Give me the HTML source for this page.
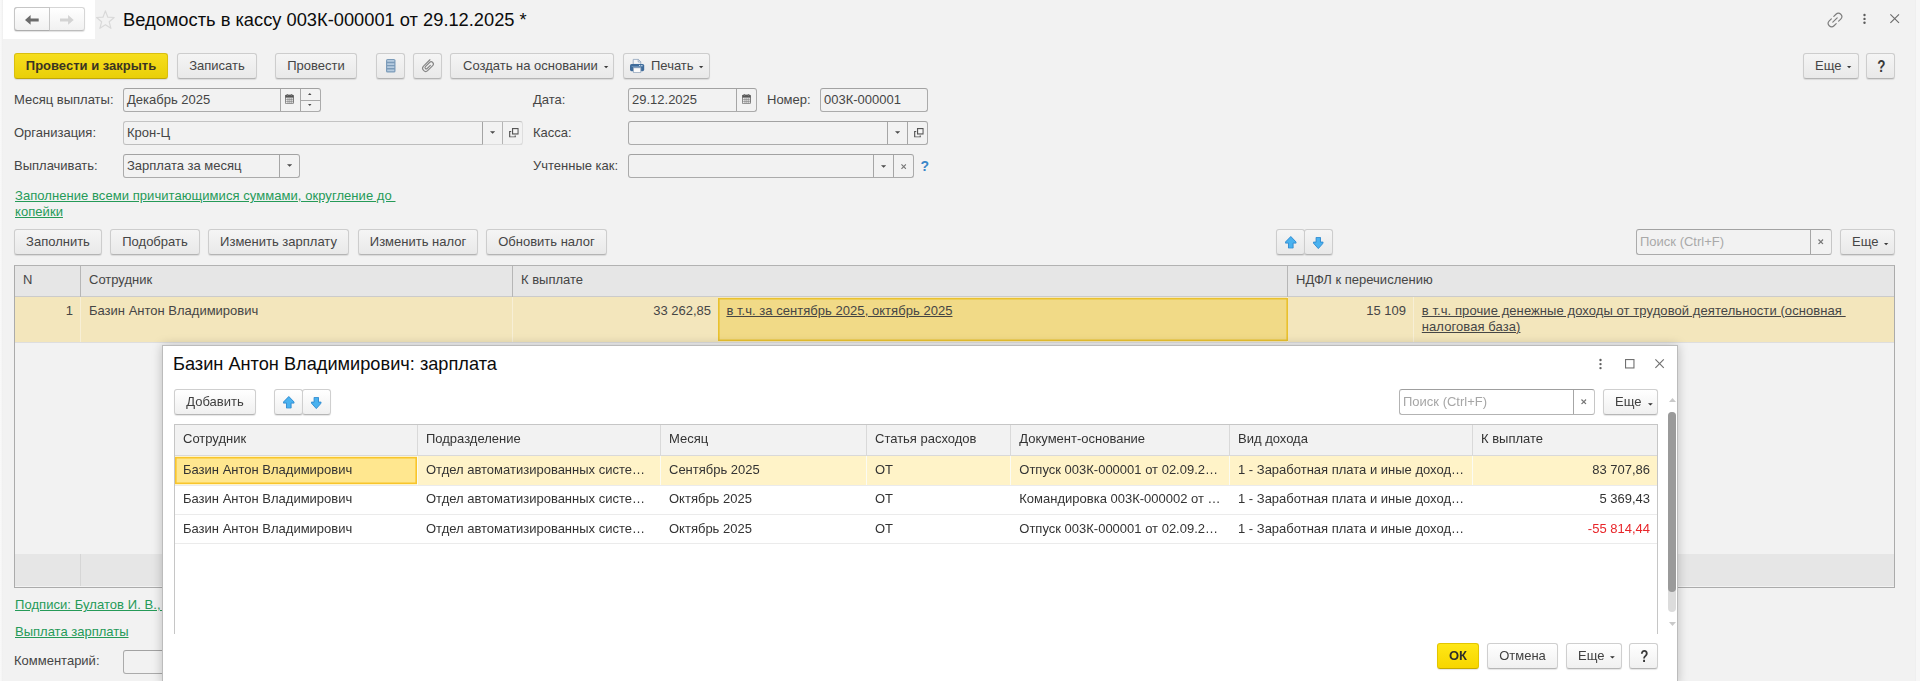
<!DOCTYPE html>
<html lang="ru">
<head>
<meta charset="utf-8">
<title>Ведомость в кассу</title>
<style>
*{box-sizing:border-box;margin:0;padding:0}
html,body{width:1920px;height:681px;overflow:hidden}
body{background:#f2f2f2;font-family:"Liberation Sans",sans-serif;font-size:13px;color:#454545;position:relative}
.a{position:absolute}
.t{position:absolute;white-space:nowrap;line-height:16px;height:16px}
.btn{position:absolute;height:26px;border:1px solid #cdcdcd;border-bottom-color:#b4b4b4;border-radius:3px;background:linear-gradient(#f5f5f5,#e9e9e9);box-shadow:0 1px 1px rgba(0,0,0,.10);text-align:center;line-height:24px;white-space:nowrap;color:#454545}
.btn.y{background:linear-gradient(#f6de1e,#e9cf08);border-color:#d9bf10;border-bottom-color:#bfa70a;color:#3a3422;font-weight:bold}
.inp{position:absolute;height:24px;border:1px solid #ababab;border-top-color:#a2a2a2;border-radius:3px;background:#f2f2f2;line-height:22px;padding-left:3px;white-space:nowrap;color:#454545}
.inp i{position:absolute;top:0;bottom:0;width:1px;background:#a6a6a6}
.btn.w{background:linear-gradient(#fff,#f0f0f0);border-color:#cfcfcf;border-bottom-color:#b6b6b6;color:#404040}
.inp.w{background:#fff;border-color:#b3b3b3;border-top-color:#9f9f9f}
.q{display:block;font-size:15.6px;font-weight:bold;transform:translate(.9px,1.3px) scaleX(.86);color:#3a3a3a}
.lnk{color:#259a58;text-decoration:underline;letter-spacing:.06px}
.u{text-decoration:underline;letter-spacing:.08px}
.car{position:absolute;width:0;height:0;border-left:2.1px solid transparent;border-right:2.1px solid transparent;border-top:2.3px solid #3e3e3e}
#mw .car{border-left-width:2.4px;border-right-width:2.4px;border-top:2.7px solid #333;margin-left:-.3px}
svg{position:absolute;overflow:visible}
</style>
</head>
<body>
<svg width="0" height="0" style="position:absolute"><defs>
<symbol id="cal" viewBox="0 0 9 10"><rect x=".4" y="1" width="8.2" height="8.8" rx="1" fill="#e9e9e9" stroke="#5a5a5a" stroke-width=".8"/><rect x=".4" y="1" width="8.2" height="2.6" fill="#555"/><rect x="1.9" y="0" width="1.2" height="2" fill="#777"/><rect x="5.9" y="0" width="1.2" height="2" fill="#777"/><path d="M1.2 5.5H7.8M1.2 7.5H7.8M3 4V9.3M4.9 4V9.3M6.8 4V9.3" stroke="#8a8a8a" stroke-width=".7"/></symbol>
<symbol id="dd" viewBox="0 0 6 3"><path d="M0 0H6L3 3Z" fill="#4a4a4a"/></symbol>
<symbol id="du" viewBox="0 0 6 3"><path d="M0 3H6L3 0Z" fill="#4a4a4a"/></symbol>
<symbol id="opn" viewBox="0 0 10 10"><path d="M2.2 3.6H.6V9.4H6.4V7.8" fill="none" stroke="#555" stroke-width="1.2"/><rect x="3.6" y=".6" width="5.8" height="5.6" fill="#f6f6f6" stroke="#555" stroke-width="1.2"/></symbol>
<symbol id="x" viewBox="0 0 6 6"><path d="M.5 .5L5.5 5.5M5.5 .5L.5 5.5" stroke="#777" stroke-width="1.3" fill="none"/></symbol>
<symbol id="up" viewBox="0 0 11.6 12.6"><path d="M5.8 .5L11.2 6.1V7.1H8.1V12.2H3.5V7.1H.4V6.1Z" fill="#4ab2ef" stroke="#2b88cf" stroke-width=".9" stroke-linejoin="round"/></symbol>
<symbol id="dn" viewBox="0 0 10.6 12"><path d="M5.3 11.6L10.2 6.1V5.1H7.5V.4H3.1V5.1H.4V6.1Z" fill="#4ab2ef" stroke="#2b88cf" stroke-width=".9" stroke-linejoin="round"/></symbol>
</defs></svg>
<!-- edges -->
<div class="a" style="left:0;top:0;width:3px;height:681px;background:linear-gradient(90deg,#fafafa,#f6f6f6 50%,#eeeeee)"></div>
<div class="a" style="left:1915px;top:0;width:5px;height:681px;background:#f7f7f7;border-left:1px solid #efefef"></div>
<div class="a" style="left:3px;top:0;width:92.4px;height:38.5px;background:#fff"></div>

<!-- nav buttons -->
<div class="a" style="left:14.3px;top:7.4px;width:70.4px;height:23.8px;border:1px solid #d6d6d6;border-bottom-color:#bdbdbd;border-radius:3px;background:linear-gradient(#fff,#f1f1f1);box-shadow:0 1px 1px rgba(0,0,0,.12)"></div>
<div class="a" style="left:14.3px;top:7.4px;width:36.2px;height:23.8px;border:1px solid #c6c6c6;border-bottom-color:#adadad;border-radius:3px 0 0 3px"></div>
<svg style="left:25.3px;top:14.6px" width="14" height="10" viewBox="0 0 14 10"><path d="M0 4.9 L5.6 0 V3.4 H13.7 V6.4 H5.6 V9.8 Z" fill="#6b6b6b"/></svg>
<svg style="left:59.6px;top:14.6px" width="14" height="10" viewBox="0 0 14 10"><path d="M13.7 4.9 L8.1 0 V3.4 H0 V6.4 H8.1 V9.8 Z" fill="#d3d3d3"/></svg>
<!-- star -->
<svg style="left:96px;top:10px" width="19" height="19" viewBox="0 0 19 19"><path d="M9.4 0.9 L11.8 7.2 L18.2 7.5 L13.2 11.8 L14.9 18.3 L9.4 14.7 L3.9 18.3 L5.6 11.8 L0.6 7.5 L7 7.2 Z" fill="none" stroke="#d9d9d9" stroke-width="1.2" stroke-linejoin="round"/></svg>
<!-- title -->
<div class="t" style="left:123px;top:8.6px;font-size:18.3px;line-height:22px;height:22px;color:#0c0c0c">Ведомость в кассу 003К-000001 от 29.12.2025 *</div>

<!-- top right icons -->
<svg style="left:1826.05px;top:10.85px" width="18" height="18" viewBox="-9 -9 18 18"><g transform="rotate(-45)" fill="none" stroke="#7c7c7c" stroke-width="1.15" stroke-linecap="round"><path d="M1.7 -3.4H4.75A3.4 3.4 0 0 1 4.75 3.4H1.7"/><path d="M-1.7 3.4H-4.75A3.4 3.4 0 0 1 -4.75 -3.4H-1.7"/><path d="M-3.1 0H3.1"/></g></svg>
<svg style="left:1862px;top:12.4px" width="5" height="14" viewBox="0 0 5 14"><circle cx="2.5" cy="3" r="1.2" fill="#5c5c5c"/><circle cx="2.5" cy="6.9" r="1.2" fill="#5c5c5c"/><circle cx="2.5" cy="10.8" r="1.2" fill="#5c5c5c"/></svg>
<svg style="left:1889.9px;top:14.1px" width="9.4" height="9.2" viewBox="0 0 9.4 9.2"><path d="M.4 .4L9 8.8M9 .4L.4 8.8" stroke="#6c6c6c" stroke-width="1.15" fill="none"/></svg>
<!-- toolbar 1 -->
<div class="btn y" style="left:14px;top:53px;width:154px">Провести и закрыть</div>
<div class="btn" style="left:177px;top:53px;width:80px">Записать</div>
<div class="btn" style="left:275px;top:53px;width:82px">Провести</div>
<div class="btn" style="left:376px;top:53px;width:29px"></div>
<svg style="left:385.8px;top:59px" width="9.5" height="13.6" viewBox="0 0 9.5 13.6"><rect width="9.5" height="13.6" rx="1.6" fill="#7b9bb9"/><path d="M1.2 1.9H8.3M1.2 5.1H8.3M1.2 8.2H8.3M1.2 11.3H8.3" stroke="#b6cbdf" stroke-width="1.7"/></svg>
<div class="btn" style="left:413px;top:53px;width:29px"></div>
<svg style="left:419.95px;top:57.7px" width="16" height="16" viewBox="-8 -8 16 16"><g transform="rotate(-45) scale(.9)"><path d="M6.4 -3.4H-3.6A3.4 3.4 0 0 0 -3.6 3.4H4A2.45 2.45 0 0 0 4 -1.5H-2.6A1.4 1.4 0 0 0 -2.6 1.3H2.4" fill="none" stroke="#868686" stroke-width="1.25" stroke-linecap="round"/></g></svg>
<div class="btn" style="left:450px;top:53px;width:164px;text-align:left;padding-left:12px">Создать на основании</div>
<svg style="left:603.7px;top:65.8px" width="4.3" height="2.4" viewBox="0 0 6 3"><path d="M0 0H6L3 3Z" fill="#3a3a3a"/></svg>
<div class="btn" style="left:623px;top:53px;width:87px;text-align:left;padding-left:27px">Печать</div>
<svg style="left:698.9px;top:65.8px" width="4.3" height="2.4" viewBox="0 0 6 3"><path d="M0 0H6L3 3Z" fill="#3a3a3a"/></svg>
<svg style="left:630px;top:58.8px" width="14.2" height="14" viewBox="0 0 14.2 14"><path d="M3.2 5.4V.4H8.4L10.8 2.8V5.4Z" fill="#f4f6f8" stroke="#8ea3bd" stroke-width=".8"/><path d="M8.2 .4V3H10.8" fill="none" stroke="#8ea3bd" stroke-width=".8"/><rect x="0" y="5" width="14.2" height="7.2" rx="1.6" fill="#3f6c9b"/><rect x="1.6" y="7.2" width="11" height=".8" fill="#8fb0d2" opacity=".6"/><rect x="9" y="6" width="1.3" height="1" fill="#c6d8ea"/><rect x="11.2" y="6" width="1.3" height="1" fill="#c6d8ea"/><rect x="3.4" y="8.8" width="7.4" height="4.8" fill="#fbfbfb" stroke="#9aabc0" stroke-width=".8"/></svg>
<div class="btn" style="left:1803px;top:53px;width:56px;text-align:left;padding-left:11px">Еще</div>
<svg style="left:1846.9px;top:65.7px" width="4.3" height="2.4" viewBox="0 0 6 3"><path d="M0 0H6L3 3Z" fill="#3a3a3a"/></svg>
<div class="btn" style="left:1866px;top:53px;width:29px"><b class="q">?</b></div>

<!-- fields -->
<div class="t" style="left:14px;top:92px">Месяц выплаты:</div>
<div class="inp" style="left:123px;top:88px;width:198px">Декабрь 2025<i style="left:156px"></i><i style="left:176px"></i></div>
<div class="t" style="left:14px;top:125px">Организация:</div>
<div class="inp" style="left:123px;top:121px;width:400px;border-color:#c3c3c3 #dedede #bdbdbd #c3c3c3">Крон-Ц<i style="left:358px;background:#a4a4a4"></i><i style="left:378px;background:#b4b4b4"></i></div>
<div class="a" style="left:483px;top:144px;width:39px;height:1px;background:#dcdcdc"></div>
<div class="t" style="left:14px;top:158px">Выплачивать:</div>
<div class="inp" style="left:123px;top:154px;width:177px">Зарплата за месяц<i style="left:155px"></i></div>

<div class="t" style="left:533px;top:92px">Дата:</div>
<div class="inp" style="left:628px;top:88px;width:129px">29.12.2025<i style="left:107px"></i></div>
<div class="t" style="left:767px;top:92px">Номер:</div>
<div class="inp" style="left:820px;top:88px;width:108px">003К-000001</div>
<div class="t" style="left:533px;top:125px">Касса:</div>
<div class="inp" style="left:628px;top:121px;width:300px"><i style="left:258px"></i><i style="left:278px"></i></div>
<div class="t" style="left:533px;top:158px">Учтенные как:</div>
<div class="inp" style="left:628px;top:154px;width:286px"><i style="left:244px"></i><i style="left:264px"></i></div>
<div class="t" style="left:920.6px;top:158px;color:#3a86c8;font-weight:bold;font-size:14px">?</div>

<svg style="left:285.3px;top:94px" width="8.9" height="10"><use href="#cal"/></svg>
<div class="a" style="left:301px;top:100px;width:19px;height:1px;background:#a8a8a8"></div>
<svg style="left:308.2px;top:93.4px" width="3.6" height="2"><use href="#du"/></svg>
<svg style="left:308.2px;top:103.8px" width="3.6" height="2"><use href="#dd"/></svg>
<svg style="left:489.7px;top:131px" width="5.2" height="3"><use href="#dd"/></svg>
<svg style="left:508.6px;top:127.8px" width="9.8" height="9.6"><use href="#opn"/></svg>
<svg style="left:287.2px;top:164px" width="5.2" height="3"><use href="#dd"/></svg>
<svg style="left:742.2px;top:94px" width="8.9" height="10"><use href="#cal"/></svg>
<svg style="left:894.7px;top:131px" width="5.2" height="3"><use href="#dd"/></svg>
<svg style="left:913.6px;top:127.8px" width="9.8" height="9.6"><use href="#opn"/></svg>
<svg style="left:880.9px;top:164.5px" width="5.2" height="3"><use href="#dd"/></svg>
<svg style="left:900.8px;top:163.5px" width="5.4" height="5.4"><use href="#x"/></svg>
<div class="t lnk" style="left:15px;top:188px">Заполнение всеми причитающимися суммами, округление до&nbsp;</div>
<div class="t lnk" style="left:15px;top:203.6px">копейки</div>

<!-- toolbar 2 -->
<div class="btn" style="left:14px;top:229px;width:88px">Заполнить</div>
<div class="btn" style="left:110px;top:229px;width:90px">Подобрать</div>
<div class="btn" style="left:208px;top:229px;width:141px">Изменить зарплату</div>
<div class="btn" style="left:358px;top:229px;width:120px">Изменить налог</div>
<div class="btn" style="left:486px;top:229px;width:121px">Обновить налог</div>
<div class="btn" style="left:1276px;top:229px;width:29px"></div>
<div class="btn" style="left:1304px;top:229px;width:29px"></div>
<svg style="left:1284.5px;top:236.3px" width="11.6" height="12.6"><use href="#up"/></svg>
<svg style="left:1312.6px;top:237.2px" width="10.6" height="12"><use href="#dn"/></svg>
<div class="inp" style="left:1636px;top:229px;width:196px;height:26px;line-height:24px;color:#a9a9a9;border-right-color:#c6c6c6">Поиск (Ctrl+F)<i style="left:173px"></i></div>
<svg style="left:1817.9px;top:239.3px" width="5.6" height="5.6"><use href="#x"/></svg>
<div class="btn" style="left:1840px;top:229px;width:55px;text-align:left;padding-left:11px">Еще</div>
<svg style="left:1883.9px;top:243.1px" width="4.3" height="2.4" viewBox="0 0 6 3"><path d="M0 0H6L3 3Z" fill="#3a3a3a"/></svg>

<!-- main table -->
<div class="a" style="left:14px;top:265px;width:1881px;height:323px;border:1px solid #ababab;border-top-color:#b2b2b2;background:#f2f2f2"></div>
<div class="a" style="left:15px;top:266px;width:1879px;height:31px;background:#e6e6e6;border-bottom:1px solid #cbcbcb"></div>
<div class="a" style="left:15px;top:297px;width:1879px;height:45px;background:#f3e6bc"></div>
<div class="a" style="left:15px;top:342px;width:1879px;height:1px;background:#dedede"></div>
<div class="a" style="left:15px;top:554px;width:1879px;height:32px;background:#e6e6e6"></div>
<div class="a" style="left:80px;top:266px;width:1px;height:31px;background:#b6b6b6"></div><div class="a" style="left:80px;top:297px;width:1px;height:45px;background:#f7efd6"></div>
<div class="a" style="left:512px;top:266px;width:1px;height:31px;background:#b6b6b6"></div><div class="a" style="left:512px;top:297px;width:1px;height:45px;background:#f7efd6"></div>
<div class="a" style="left:1287px;top:266px;width:1px;height:31px;background:#b6b6b6"></div><div class="a" style="left:1287px;top:297px;width:1px;height:45px;background:#f7efd6"></div>
<div class="a" style="left:1413px;top:297px;width:1px;height:45px;background:#f7efd6"></div>
<div class="a" style="left:80px;top:554px;width:1px;height:32px;background:#d6d6d6"></div>
<div class="t" style="left:23px;top:272px">N</div>
<div class="t" style="left:89px;top:272px">Сотрудник</div>
<div class="t" style="left:521px;top:272px">К выплате</div>
<div class="t" style="left:1296px;top:272px">НДФЛ к перечислению</div>
<div class="t" style="left:23px;top:303px;width:50px;text-align:right">1</div>
<div class="t" style="left:89px;top:303px">Базин Антон Владимирович</div>
<div class="t" style="left:611px;top:303px;width:100px;text-align:right">33 262,85</div>
<div class="a" style="left:718px;top:297.5px;width:569.5px;height:43.8px;background:#f1da87;box-shadow:inset 0 0 0 1.6px #e9c12e"></div>
<div class="t u" style="left:726.4px;top:303px;letter-spacing:.04px">в т.ч. за сентябрь 2025, октябрь 2025</div>
<div class="t" style="left:1306px;top:303px;width:100px;text-align:right">15 109</div>
<div class="t u" style="left:1421.8px;top:303px">в т.ч. прочие денежные доходы от трудовой деятельности (основная&nbsp;</div>
<div class="t u" style="left:1421.8px;top:319px">налоговая база)</div>

<!-- bottom -->
<div class="t lnk" style="left:15px;top:597px">Подписи: Булатов И. В.,&nbsp;</div>
<div class="t lnk" style="left:15px;top:624px;letter-spacing:0">Выплата зарплаты</div>
<div class="t" style="left:14px;top:653px">Комментарий:</div>
<div class="inp" style="left:123px;top:650px;width:400px"></div>
<!-- modal -->
<div class="a" style="left:162px;top:345px;width:1516px;height:340px;background:#fff;border:1px solid #bcbcbc;box-shadow:0 0 10px rgba(0,0,0,.22)"></div>
<div class="t" style="left:173px;top:353px;font-size:18.2px;line-height:22px;height:22px;color:#0c0c0c">Базин Антон Владимирович: зарплата</div>
<div class="a" id="mw" style="left:0;top:0;width:1920px;height:681px;will-change:transform;color:#333">
<svg style="left:1598.15px;top:357px" width="5" height="14" viewBox="0 0 5 14"><circle cx="2.5" cy="3" r="1.2" fill="#606060"/><circle cx="2.5" cy="7.1" r="1.2" fill="#606060"/><circle cx="2.5" cy="11.1" r="1.2" fill="#606060"/></svg>
<svg style="left:1625.2px;top:359.2px" width="9.5" height="9.5" viewBox="0 0 9.5 9.5"><rect x=".55" y=".55" width="8.4" height="8.4" fill="none" stroke="#707070" stroke-width="1.1"/></svg>
<svg style="left:1654.9px;top:359.3px" width="9.2" height="9.2" viewBox="0 0 9.2 9.2"><path d="M.4 .4L8.8 8.8M8.8 .4L.4 8.8" stroke="#707070" stroke-width="1.15" fill="none"/></svg>
<div class="btn w" style="left:174px;top:389px;width:82px">Добавить</div>
<div class="btn w" style="left:274px;top:389px;width:29px"></div>
<div class="btn w" style="left:302px;top:389px;width:29px"></div>
<svg style="left:282.5px;top:396.1px" width="11.6" height="12.6"><use href="#up"/></svg>
<svg style="left:310.6px;top:397px" width="10.6" height="12"><use href="#dn"/></svg>
<div class="inp w" style="left:1399px;top:389px;width:196px;height:26px;line-height:24px;color:#a6a6a6;border-right-color:#c6c6c6">Поиск (Ctrl+F)<i style="left:173px"></i></div>
<svg style="left:1580.9px;top:399.3px" width="5.6" height="5.6"><use href="#x"/></svg>
<div class="btn w" style="left:1603px;top:389px;width:55px;text-align:left;padding-left:11px">Еще</div>
<svg style="left:1647.7px;top:403px" width="4.8" height="2.7" viewBox="0 0 6 3"><path d="M0 0H6L3 3Z" fill="#2e2e2e"/></svg>
<div class="a" style="left:174px;top:424px;width:1484px;height:210px;border:1px solid #c6c6c6;border-bottom:none;background:#fff"></div>
<div class="a" style="left:175px;top:425px;width:1482px;height:31px;background:#f2f2f2;border-bottom:1px solid #d9d9d9"></div>
<div class="a" style="left:175px;top:456px;width:1482px;height:29px;background:#fff3c8"></div>
<div class="a" style="left:175px;top:485px;width:1482px;height:1px;background:#ebebeb"></div>
<div class="a" style="left:175px;top:514px;width:1482px;height:1px;background:#ebebeb"></div>
<div class="a" style="left:175px;top:543px;width:1482px;height:1px;background:#ebebeb"></div>
<div class="a" style="left:417px;top:425px;width:1px;height:31px;background:#d9d9d9"></div>
<div class="a" style="left:417px;top:456px;width:1px;height:29px;background:#fbfbf3"></div>
<div class="a" style="left:660px;top:425px;width:1px;height:31px;background:#d9d9d9"></div>
<div class="a" style="left:660px;top:456px;width:1px;height:29px;background:#fbfbf3"></div>
<div class="a" style="left:866px;top:425px;width:1px;height:31px;background:#d9d9d9"></div>
<div class="a" style="left:866px;top:456px;width:1px;height:29px;background:#fbfbf3"></div>
<div class="a" style="left:1010px;top:425px;width:1px;height:31px;background:#d9d9d9"></div>
<div class="a" style="left:1010px;top:456px;width:1px;height:29px;background:#fbfbf3"></div>
<div class="a" style="left:1229px;top:425px;width:1px;height:31px;background:#d9d9d9"></div>
<div class="a" style="left:1229px;top:456px;width:1px;height:29px;background:#fbfbf3"></div>
<div class="a" style="left:1472px;top:425px;width:1px;height:31px;background:#d9d9d9"></div>
<div class="a" style="left:1472px;top:456px;width:1px;height:29px;background:#fbfbf3"></div>
<div class="a" style="left:175px;top:457px;width:242px;height:27px;background:#ffe78f;box-shadow:inset 0 0 0 1.6px #f8c52c"></div>
<div class="t" style="left:183px;top:431px">Сотрудник</div>
<div class="t" style="left:426px;top:431px">Подразделение</div>
<div class="t" style="left:669px;top:431px">Месяц</div>
<div class="t" style="left:875px;top:431px">Статья расходов</div>
<div class="t" style="left:1019.3px;top:431px">Документ-основание</div>
<div class="t" style="left:1238px;top:431px">Вид дохода</div>
<div class="t" style="left:1481px;top:431px">К выплате</div>
<div class="t" style="left:183px;top:462px">Базин Антон Владимирович</div>
<div class="t" style="left:426px;top:462px">Отдел автоматизированных систе…</div>
<div class="t" style="left:669px;top:462px">Сентябрь 2025</div>
<div class="t" style="left:875px;top:462px">ОТ</div>
<div class="t" style="left:1019.3px;top:462px">Отпуск 003К-000001 от 02.09.2…</div>
<div class="t" style="left:1238px;top:462px">1 - Заработная плата и иные доход…</div>
<div class="t" style="left:1500px;top:462px;width:150px;text-align:right">83 707,86</div>
<div class="t" style="left:183px;top:491px">Базин Антон Владимирович</div>
<div class="t" style="left:426px;top:491px">Отдел автоматизированных систе…</div>
<div class="t" style="left:669px;top:491px">Октябрь 2025</div>
<div class="t" style="left:875px;top:491px">ОТ</div>
<div class="t" style="left:1019.3px;top:491px">Командировка 003К-000002 от …</div>
<div class="t" style="left:1238px;top:491px">1 - Заработная плата и иные доход…</div>
<div class="t" style="left:1500px;top:491px;width:150px;text-align:right">5 369,43</div>
<div class="t" style="left:183px;top:520.5px">Базин Антон Владимирович</div>
<div class="t" style="left:426px;top:520.5px">Отдел автоматизированных систе…</div>
<div class="t" style="left:669px;top:520.5px">Октябрь 2025</div>
<div class="t" style="left:875px;top:520.5px">ОТ</div>
<div class="t" style="left:1019.3px;top:520.5px">Отпуск 003К-000001 от 02.09.2…</div>
<div class="t" style="left:1238px;top:520.5px">1 - Заработная плата и иные доход…</div>
<div class="t" style="left:1500px;top:520.5px;width:150px;text-align:right;color:#e8262a">-55 814,44</div>
<div class="a" style="left:1668px;top:411.5px;width:7.5px;height:200.5px;border-radius:4px;background:#dcdcdc"></div>
<div class="a" style="left:1668px;top:411.5px;width:7.5px;height:180.3px;border-radius:4px;background:#9a9a9a"></div>
<svg style="left:1669px;top:398px" width="7" height="4" viewBox="0 0 7 4"><path d="M0 4 L3.5 0 L7 4Z" fill="#c9c9c9"/></svg>
<svg style="left:1669px;top:622px" width="7" height="4" viewBox="0 0 7 4"><path d="M0 0 L3.5 4 L7 0Z" fill="#c9c9c9"/></svg>
<div class="btn y" style="left:1437px;top:643px;width:42px;background:linear-gradient(#ffe716,#f7d600);border-color:#e3c600;border-bottom-color:#c6aa00;color:#2e2e2a">ОК</div>
<div class="btn w" style="left:1487px;top:643px;width:71px">Отмена</div>
<div class="btn w" style="left:1566px;top:643px;width:56px;text-align:left;padding-left:11px">Еще</div>
<svg style="left:1609.9px;top:655.8px" width="4.8" height="2.7" viewBox="0 0 6 3"><path d="M0 0H6L3 3Z" fill="#2e2e2e"/></svg>
<div class="btn w" style="left:1629px;top:643px;width:29px"><b class="q">?</b></div>
</div>
</body>
</html>
